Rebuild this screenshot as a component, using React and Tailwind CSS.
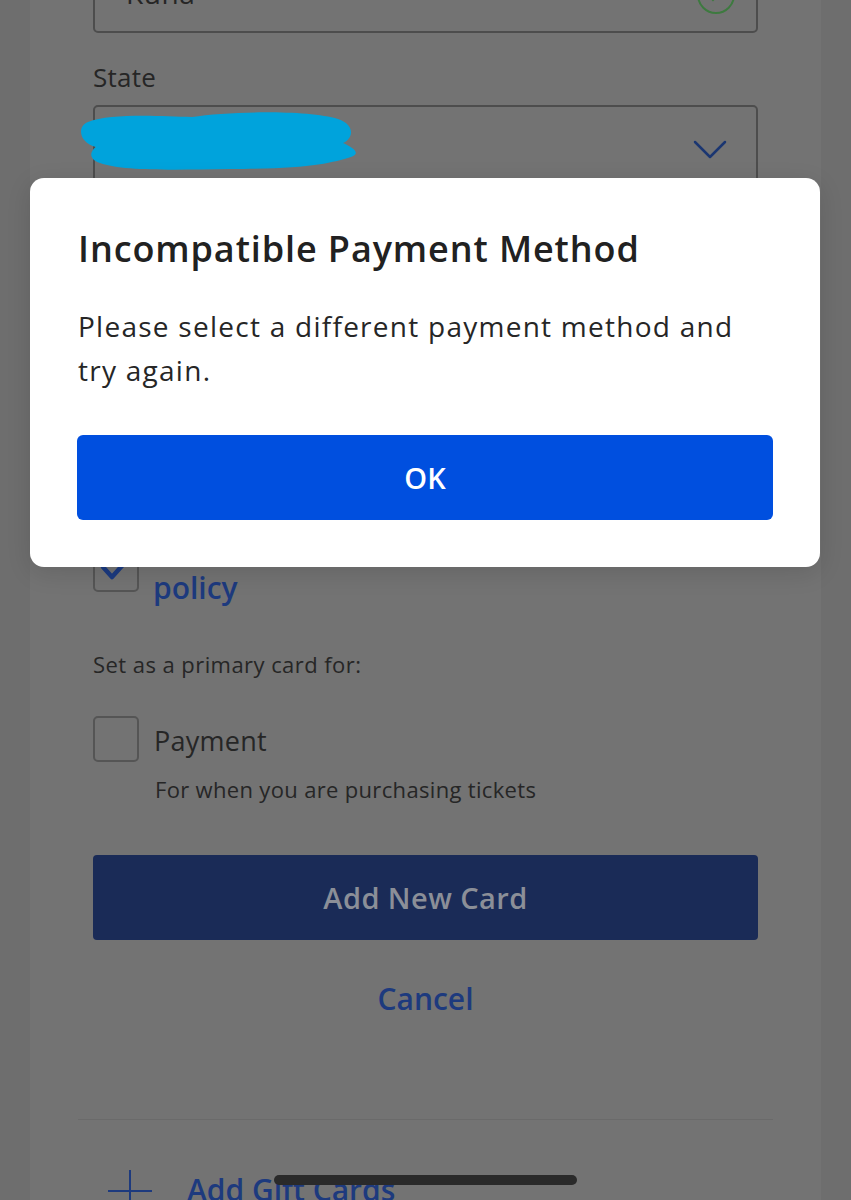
import React from "react";

const font = { fontFamily: "'Open Sans', 'Noto Sans', sans-serif" };

const Checkbox = ({ checked = false, className = "" }) => (
	<div
		className={`relative h-[46px] w-[46px] shrink-0 rounded-[5px] border-2 border-[#555555] ${className}`}
	>
		{checked && (
			<svg
				className="absolute -left-[2px] -top-[2px]"
				width="46"
				height="46"
				viewBox="0 0 46 46"
				fill="none"
			>
				<path
					d="M10 21 L19 31 L36 12"
					stroke="#1b3a80"
					strokeWidth="4.5"
					strokeLinecap="round"
					strokeLinejoin="round"
				/>
			</svg>
		)}
	</div>
);

const IncompatibleModal = () => (
	<div className="absolute left-[30px] top-[178px] w-[790px] rounded-[14px] bg-white px-[47px] pb-[47px] pt-[49px] shadow-[0_6px_24px_rgba(0,0,0,0.12)]">
		<h2 className="pl-px text-[36px] font-semibold leading-[44px] tracking-[0.025em] text-[#212121]">
			Incompatible Payment Method
		</h2>
		<p className="mt-[33px] pl-px text-[28px] leading-[44px] tracking-[0.045em] text-[#262626]">
			Please select a different payment method and try again.
		</p>
		<button className="mt-[43px] flex h-[85px] w-full items-center justify-center rounded-[6px] bg-[#004fdf] text-[29px] font-semibold text-white">
			OK
		</button>
	</div>
);

export default function App() {
	return (
		<div
			className="relative h-[1200px] w-[851px] overflow-hidden bg-[#6e6e6e]"
			style={font}
		>
			<div className="mx-[30px] flow-root h-full bg-[#737373] px-[63px]">
				{/* city field, scrolled mostly off the top */}
				<div className="relative -mt-[47px] h-[80px] rounded-[5px] border-2 border-[#4d4d4d]">
					<span className="absolute left-[31px] top-[19px] text-[28px] leading-[38px] tracking-[0.02em] text-[#262626]">
						Kuna
					</span>
					<svg
						className="absolute left-[600px] top-[19px]"
						width="42"
						height="42"
						viewBox="0 0 42 42"
						fill="none"
					>
						<circle cx="21" cy="21" r="18" stroke="#3d7a3f" strokeWidth="2" />
						<path
							d="M13 21 L18 26 L29 15"
							stroke="#3d7a3f"
							strokeWidth="2"
							strokeLinecap="round"
						/>
					</svg>
				</div>

				<label className="mt-[28px] block text-[26px] leading-[32px] tracking-[0.01em] text-[#262626]">
					State
				</label>
				<div className="relative mt-[12px] h-[80px] rounded-[5px] border-2 border-[#4d4d4d]">
					<svg
						className="absolute -left-[15px] top-[3px]"
						width="280"
						height="62"
						viewBox="0 0 280 62"
					>
						<path
							d="M8 12 C30 3 80 6 112 7 C150 1 228 0 258 9 C276 15 273 29 263 33 C272 37 282 43 271 47 C252 53 228 59 150 59 C90 60 42 61 20 53 C8 49 10 41 16 37 C0 33 -4 17 8 12 Z"
							fill="#00a3dc"
						/>
					</svg>
					<svg
						className="absolute right-[29px] top-[33px]"
						width="34"
						height="20"
						viewBox="0 0 34 20"
						fill="none"
					>
						<path
							d="M2 2 L17 17 L32 2"
							stroke="#1b3671"
							strokeWidth="2.5"
							strokeLinecap="round"
							strokeLinejoin="round"
						/>
					</svg>
				</div>

				{/* terms row, top half under the dialog */}
				<div className="mt-[337px] flex items-start gap-[14px]">
					<Checkbox checked className="mt-[24px]" />
					<div className="flex flex-col gap-[12px] text-[30px] font-semibold leading-[36px] text-[#1d3a7e]">
						<div>I agree to the privacy</div>
						<div>policy</div>
					</div>
				</div>

				<p className="mt-[44px] text-[22px] leading-[28px] tracking-[0.02em] text-[#262626]">
					Set as a primary card for:
				</p>
				<div className="mt-[38px] flex items-start gap-[15px]">
					<Checkbox />
					<span className="mt-[9px] text-[27px] leading-[32px] tracking-[0.01em] text-[#262626]">
						Payment
					</span>
				</div>
				<p className="mt-[13px] pl-[62px] text-[22px] leading-[28px] tracking-[0.015em] text-[#262626]">
					For when you are purchasing tickets
				</p>

				<button className="mt-[52px] flex h-[85px] w-full items-center justify-center rounded-[4px] bg-[#1a2b57] text-[29px] font-semibold tracking-[0.015em] text-[#8b8f98]">
					Add New Card
				</button>
				<div className="mt-[39px] text-center text-[30px] font-semibold leading-[40px] text-[#1d3a7e]">
					Cancel
				</div>

				<div className="-mx-[15px] mt-[100px] h-px bg-[#6a6a6a]" />

				<div className="mt-[52px] flex items-start gap-[35px] pl-[15px]">
					<svg
						className="mt-[-2px] shrink-0"
						width="44"
						height="44"
						viewBox="0 0 44 44"
						fill="none"
					>
						<path d="M22 0 V44 M0 21 H44" stroke="#1d3a7e" strokeWidth="2" />
					</svg>
					<span className="text-[30px] font-semibold leading-[36px] text-[#1d3a7e]">
						Add Gift Cards
					</span>
				</div>
			</div>

			<IncompatibleModal />

			<div className="absolute left-[274px] top-[1175px] h-[10px] w-[303px] rounded-full bg-[#2a2a2a]" />
		</div>
	);
}
